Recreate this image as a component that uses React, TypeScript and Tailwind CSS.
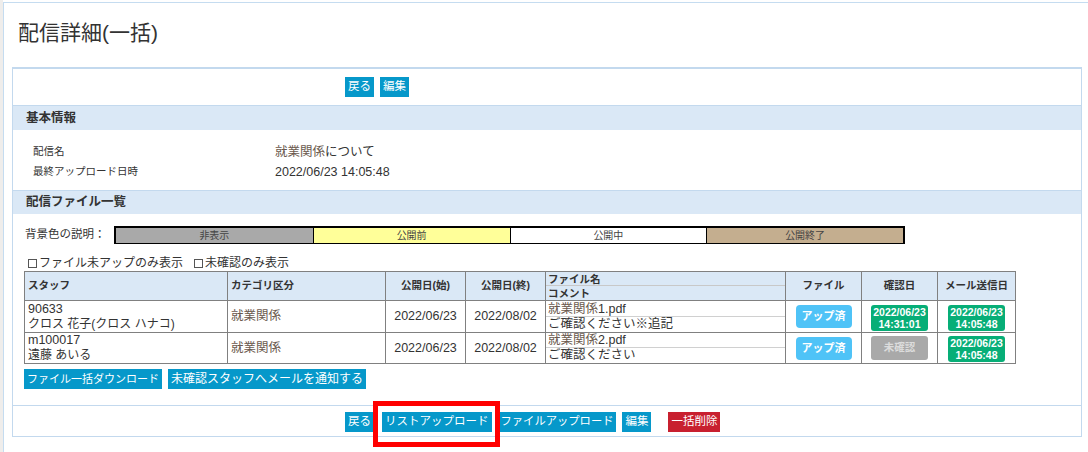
import React from 'react';

const Btn = ({
  children,
  red = false,
  size = 'text-[11.5px]',
}: {
  children: React.ReactNode;
  red?: boolean;
  size?: string;
}) => (
  <span
    className={`inline-flex h-[20px] items-center px-[3px] leading-none text-white ${size} ${
      red ? 'bg-[#c8202f]' : 'bg-[#0698ca]'
    }`}
  >
    {children}
  </span>
);

const Kanji = ({ children }: { children: React.ReactNode }) => (
  <span className="text-[#6b5a4e]">{children}</span>
);

const rows = [
  {
    id: '90633',
    name: 'クロス 花子(クロス ハナコ)',
    file: '1.pdf',
    comment: 'ご確認ください※追記',
    confirmed: ['2022/06/23', '14:31:01'],
    mail: ['2022/06/23', '14:05:48'],
  },
  {
    id: 'm100017',
    name: '遠藤 あいる',
    file: '2.pdf',
    comment: 'ご確認ください',
    confirmed: null,
    mail: ['2022/06/23', '14:05:48'],
  },
];

export default function App() {
  return (
    <div className="flex h-[452px] w-[1088px] bg-white font-['Liberation_Sans','Noto_Sans_CJK_JP',sans-serif] text-[#333]">
      <div className="w-[3px] bg-[#efedeb]" />
      <div className="mt-[2px] flex-1 border-l border-t border-[#c5dcf0] bg-white">
        {/* title */}
        <h1 className="pl-[14px] pt-[16px] text-[21px] leading-[28px] font-normal text-[#333]">配信詳細(一括)</h1>

        {/* panel */}
        <div className="ml-[8px] mr-[6px] mt-[20px] border border-t-2 border-[#c3d9ee]">
          {/* top buttons */}
          <div className="flex h-[37px] items-center gap-[6px] border-b border-[#c3d9ee] pl-[332px]">
            <Btn>戻る</Btn>
            <Btn>編集</Btn>
          </div>

          <div className="flex h-[24px] items-center bg-[#dae8f6] pl-[13px] text-[12.5px] font-bold text-[#333]">
            基本情報
          </div>
          <div className="border-b border-[#c3d9ee] pb-[8px] pt-[12px] pl-[20px]">
            <div className="grid h-[20px] grid-cols-[242px_1fr] items-center">
              <span className="text-[10.5px]">配信名</span>
              <span className="text-[12.5px]">
                <Kanji>就業関係</Kanji>について
              </span>
            </div>
            <div className="grid h-[20px] grid-cols-[242px_1fr] items-center">
              <span className="text-[10.5px]">最終アップロード日時</span>
              <span className="text-[12.5px]">2022/06/23 14:05:48</span>
            </div>
          </div>

          <div className="flex h-[23px] items-center bg-[#dae8f6] pl-[13px] text-[12.5px] font-bold text-[#333]">
            配信ファイル一覧
          </div>

          <div className="border-b border-[#c3d9ee] px-[11px] pb-[16px] pt-[12px]">
            {/* legend */}
            <div className="flex h-[18px] items-center">
              <span className="w-[90px] pl-[1px] text-[11.5px]">背景色の説明：</span>
              <div className="grid h-[18px] w-[791px] grid-cols-4 border-2 border-black text-[10px] text-[#444]">
                <div className="flex items-center justify-center bg-[#a9a9a9]">非表示</div>
                <div className="flex items-center justify-center border-l border-black bg-[#ffff99]">公開前</div>
                <div className="flex items-center justify-center border-l border-black bg-white">公開中</div>
                <div className="flex items-center justify-center border-l border-black bg-[#c4ae8f]">公開終了</div>
              </div>
            </div>

            {/* checkboxes */}
            <div className="mt-[12px] flex h-[14px] items-center pl-[4px] text-[12px]">
              <span className="mr-[2px] inline-block h-[9px] w-[9px] border border-[#555] bg-white" />
              <span>ファイル未アップのみ表示</span>
              <span className="ml-[11px] mr-[2px] inline-block h-[9px] w-[9px] border border-[#555] bg-white" />
              <span>未確認のみ表示</span>
            </div>

            {/* table */}
            <table className="mt-[1px] w-[991px] table-fixed border-collapse text-[12.5px]">
              <colgroup>
                <col className="w-[203px]" />
                <col className="w-[158px]" />
                <col className="w-[80px]" />
                <col className="w-[80px]" />
                <col className="w-[240px]" />
                <col className="w-[76px]" />
                <col className="w-[76px]" />
                <col className="w-[78px]" />
              </colgroup>
              <thead>
                <tr className="h-[29px] bg-[#dae8f6] text-[10.5px] font-bold text-[#333]">
                  <th className="border border-[#808080] pl-[3px] text-left">スタッフ</th>
                  <th className="border border-[#808080] pl-[3px] text-left">カテゴリ区分</th>
                  <th className="border border-[#808080] text-center">公開日(始)</th>
                  <th className="border border-[#808080] text-center">公開日(終)</th>
                  <th className="border border-[#808080] p-0 text-left">
                    <div className="h-[14px] border-b border-[#c8c8c8] pl-[2px] leading-[14px]">ファイル名</div>
                    <div className="h-[14px] pl-[2px] leading-[14px]">コメント</div>
                  </th>
                  <th className="border border-[#808080] text-center">ファイル</th>
                  <th className="border border-[#808080] text-center">確認日</th>
                  <th className="border border-[#808080] text-center">メール送信日</th>
                </tr>
              </thead>
              <tbody>
                {rows.map((r, i) => (
                  <tr key={r.id} className={i === 0 ? 'h-[32px]' : 'h-[31px]'}>
                    <td className="border border-[#808080] pl-[3px] leading-[15px]">
                      <div>{r.id}</div>
                      <div className="text-[12px]">{r.name}</div>
                    </td>
                    <td className="border border-[#808080] pl-[3px]">
                      <Kanji>就業関係</Kanji>
                    </td>
                    <td className="border border-[#808080] text-center">2022/06/23</td>
                    <td className="border border-[#808080] text-center">2022/08/02</td>
                    <td className="border border-[#808080] p-0">
                      <div className="h-[15px] border-b border-[#d0d0d0] pl-[2px] leading-[15px]">
                        <Kanji>就業関係</Kanji>
                        {r.file}
                      </div>
                      <div className="h-[15px] pl-[2px] leading-[15px]">{r.comment}</div>
                    </td>
                    <td className="border border-[#808080] text-center">
                      <span className="inline-flex h-[23px] w-[56px] items-center justify-center rounded-[4px] bg-[#4fc3f7] text-[11px] font-bold text-white">
                        アップ済
                      </span>
                    </td>
                    <td className="border border-[#808080] text-center">
                      {r.confirmed ? (
                        <span className="inline-flex h-[26px] w-[57px] flex-col items-center justify-center rounded-[3px] bg-[#07ae77] text-[10.5px] leading-[12px] font-bold text-white">
                          <span>{r.confirmed[0]}</span>
                          <span>{r.confirmed[1]}</span>
                        </span>
                      ) : (
                        <span className="inline-flex h-[24px] w-[57px] items-center justify-center rounded-[3px] bg-[#a9a9a9] text-[10.5px] font-bold text-[#dcdcdc]">
                          未確認
                        </span>
                      )}
                    </td>
                    <td className="border border-[#808080] text-center">
                      <span className="inline-flex h-[26px] w-[57px] flex-col items-center justify-center rounded-[3px] bg-[#07ae77] text-[10.5px] leading-[12px] font-bold text-white">
                        <span>{r.mail[0]}</span>
                        <span>{r.mail[1]}</span>
                      </span>
                    </td>
                  </tr>
                ))}
              </tbody>
            </table>

            <div className="mt-[5px] flex gap-[6px]">
              <Btn size="text-[11px]">ファイル一括ダウンロード</Btn>
              <Btn size="text-[12px]">未確認スタッフへメールを通知する</Btn>
            </div>
          </div>

          {/* bottom buttons */}
          <div className="flex h-[30px] items-end pb-[4px] pl-[332px]">
            <Btn>戻る</Btn>
            <div className="relative ml-[8px] flex">
              <Btn>リストアップロード</Btn>
              <span className="absolute -bottom-[15px] -left-[9px] -right-[8px] -top-[11px] border-[5px] border-[#ff0000]" />
            </div>
            <div className="ml-[6px] flex">
              <Btn size="text-[11.3px]">ファイルアップロード</Btn>
            </div>
            <div className="ml-[6px] flex">
              <Btn>編集</Btn>
            </div>
            <div className="ml-[17px] flex">
              <Btn red>一括削除</Btn>
            </div>
          </div>
        </div>
      </div>
    </div>
  );
}
